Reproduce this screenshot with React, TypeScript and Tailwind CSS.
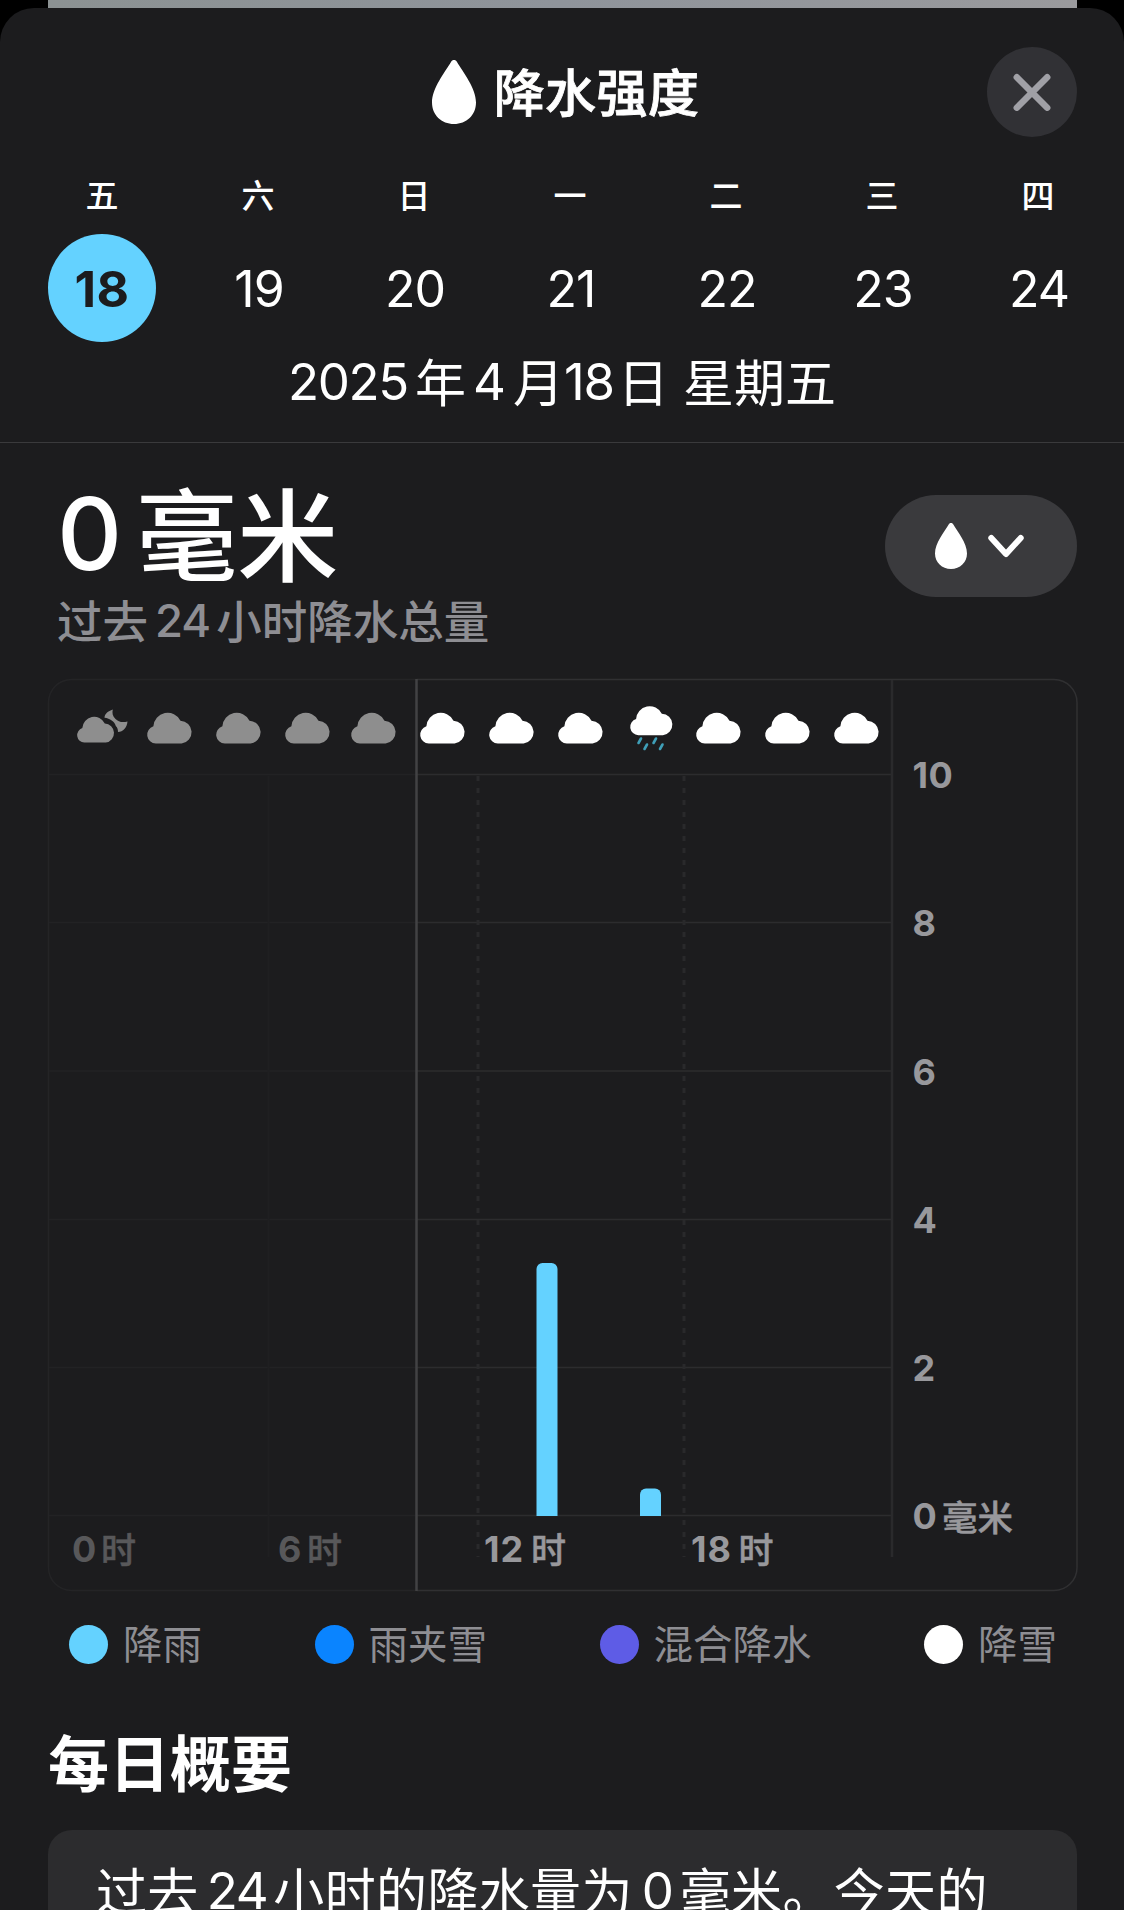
import React from "react";

const FONT = "font-['Inter','Noto_Sans_CJK_SC',sans-serif]";

const DAYS = [
  { label: "五", day: "18" },
  { label: "六", day: "19" },
  { label: "日", day: "20" },
  { label: "一", day: "21" },
  { label: "二", day: "22" },
  { label: "三", day: "23" },
  { label: "四", day: "24" },
];

const LEGEND = [
  { label: "降雨", dot: "bg-[#64d2ff]" },
  { label: "雨夹雪", dot: "bg-[#0a84ff]" },
  { label: "混合降水", dot: "bg-[#5e5ce6]" },
  { label: "降雪", dot: "bg-white" },
];

function Drop({ className }: { className: string }) {
  return (
    <svg viewBox="0 0 44 64" className={className} fill="currentColor" preserveAspectRatio="none">
      <path d="M22 0c-1.300 0-2.200.6-3 1.900C13 12 0 28 0 42.500C0 55 9.500 64 22 64s22-9 22-21.500C44 28 31 12 25 1.900C24.200.6 23.300 0 22 0z" />
    </svg>
  );
}

/* Cloud silhouette drawn in a 46 x 31 box. */
const CLOUD =
  "M8.800 31A8.800 8.800 0 0 1 6.400 13.800A14.300 14.300 0 0 1 33.500 8.200A11.450 11.450 0 0 1 34.600 31z";

const CLOUDS = [
  { x: 147, past: true },
  { x: 216, past: true },
  { x: 285, past: true },
  { x: 351, past: true },
  { x: 420, past: false },
  { x: 489, past: false },
  { x: 558, past: false },
  { x: 696, past: false },
  { x: 765, past: false },
  { x: 834, past: false },
];

const GRID = [
  { y: 774.5, label: "10" },
  { y: 922.5, label: "8" },
  { y: 1071, label: "6" },
  { y: 1219.5, label: "4" },
  { y: 1367.5, label: "2" },
  { y: 1515.5, label: "0" },
];

const HOURS = [
  { x: 72, hx: 101, label: "0", past: true },
  { x: 278, hx: 307, label: "6", past: true },
  { x: 484, hx: 531, label: "12", past: false },
  { x: 691, hx: 738.5, label: "18", past: false },
];

function Chart() {
  return (
    <svg
      viewBox="47 678 1032 914"
      className={`-ml-px -mt-px block h-[914px] w-[1032px] shrink-0 ${FONT}`}
      fill="none"
    >
      {/* frame: the elapsed part is dimmer */}
      <path d="M416.500 679.500H71.500a23 23 0 0 0-23 23V1567.500a23 23 0 0 0 23 23H416.500" stroke="#242426" strokeWidth="1.500" />
      <path d="M416.500 679.500H1054a23 23 0 0 1 23 23V1567.500a23 23 0 0 1-23 23H416.500" stroke="#303032" strokeWidth="1.500" />

      {GRID.map((g) => (
        <g key={g.y}>
          <path d={`M49 ${g.y}H416`} stroke="#222224" strokeWidth="1.500" />
          <path d={`M417 ${g.y}H891`} stroke="#2c2c2e" strokeWidth="1.500" />
          <text x="912.500" y={g.y + 13.500} fontSize="36" fontWeight="650" letterSpacing="0.600" fill="#98989c">
            {g.label}
          </text>
        </g>
      ))}
      <text x="942" y="1530.500" fontSize="35.500" fontWeight="500" fill="#98989c" stroke="#98989c" strokeWidth="0.500">
        毫米
      </text>

      <path d="M268.500 776V1557" stroke="#1f1f21" strokeWidth="2" />
      <path d="M478 776V1557M684 776V1557" stroke="#29292b" strokeWidth="3" strokeDasharray="5 7" />
      <path d="M892 680V1557" stroke="#2a2a2c" strokeWidth="2.500" />
      <path d="M416.500 679V1591" stroke="#424244" strokeWidth="2.500" />

      {HOURS.map((h) => (
        <g key={h.label} fill={h.past ? "#58585a" : "#98989c"} stroke={h.past ? "#58585a" : "#98989c"} strokeWidth="0">
          <text x={h.x} y="1562" fontSize="36" fontWeight="650" letterSpacing="1">
            {h.label}
          </text>
          <text x={h.hx} y="1563" fontSize="35" fontWeight="500" strokeWidth="0.500">
            时
          </text>
        </g>
      ))}

      <path d="M536.500 1516V1269a6 6 0 0 1 6-6h9a6 6 0 0 1 6 6V1516z" fill="#64d2ff" />
      <path d="M640 1516V1494.500a6 6 0 0 1 6-6h9a6 6 0 0 1 6 6V1516z" fill="#64d2ff" />

      {/* night cloud with moon */}
      <g fill="#8e8e8e">
        <path transform="translate(77 716.500) scale(.83 .84)" d={CLOUD} />
        <path d="M112.800 709.500C108 711 104.500 714 104.500 717.800C110 718.500 114.500 721.500 115.800 726C117.500 727.500 118 729.500 118 732C123 732 127 727.500 127.500 721.500C122.500 722.800 118.500 722 115.500 719C112.500 716 112 713 112.800 709.500z" />
      </g>
      {CLOUDS.map((c) => (
        <path key={c.x} transform={`translate(${c.x} 712.500)`} d={CLOUD} fill={c.past ? "#8e8e8e" : "#ffffff"} />
      ))}
      <path transform="translate(630 706) scale(.95 .94)" d={CLOUD} fill="#ffffff" />
      <path
        d="M641 738.500l-2.500 4.500M656 738.500l-2.500 4.500M647 744.500l-2.500 4.500M662.500 744.500l-2.500 4.500"
        stroke="#3f9fb8"
        strokeWidth="2.600"
        strokeLinecap="round"
      />
    </svg>
  );
}

/* Chinese run, set slightly below the baseline of the digits. */
function Han({ children }: { children: string }) {
  return <span className="align-[-0.035em] leading-none">{children}</span>;
}

export default function App() {
  return (
    <div className={`h-[1910px] w-[1124px] overflow-hidden bg-black text-white ${FONT}`}>
      <div className="mx-12 h-2 w-[1029px] bg-linear-to-r from-[#8c9293] via-[#8f949b] to-[#9a9a9d]" />
      <div className="flex h-[1902px] flex-col overflow-hidden rounded-t-[34px] bg-[#1c1c1e]">
        <header className="mt-[39px] ml-12 grid h-[90px] w-[1029px] shrink-0 grid-cols-[90px_1fr_90px] items-center">
          <span />
          <h1 className="flex items-center justify-center gap-[18px] pl-[6px]">
            <Drop className="h-16 w-11" />
            <span className="pt-1 text-[51px] leading-[60px] font-medium tracking-[0.4px] [-webkit-text-stroke:0.8px_white]">降水强度</span>
          </h1>
          <button className="flex size-[90px] items-center justify-center rounded-full bg-[#313135]" aria-label="关闭">
            <svg viewBox="0 0 38 38" className="size-[38px]" fill="none" stroke="#a0a0a6" strokeWidth="6.500" strokeLinecap="round">
              <path d="M3.800 4.300l30.400 30.400M34.200 4.300l-30.400 30.400" />
            </svg>
          </button>
        </header>

        <div className="mt-[39px] ml-6 grid w-[1092px] shrink-0 grid-cols-7">
          {DAYS.map((d, i) => (
            <div key={d.day} className="flex flex-col items-center gap-[18px]">
              <span className="text-[33px] leading-10 font-medium">{d.label}</span>
              <span
                className={
                  i === 0
                    ? "flex size-[108px] items-center justify-center rounded-full bg-[#64d2ff] pt-0.5 text-[50px] font-bold tracking-[0.5px] text-[#1c1c1e]"
                    : "flex size-[108px] items-center justify-center pt-0.5 pl-0.5 text-[50px] tracking-[-1px]"
                }
              >
                {d.day}
              </span>
            </div>
          ))}
        </div>

        <p className="mt-[10px] h-[60px] shrink-0 text-center text-[51px] leading-[60px] whitespace-nowrap">
          <span className="mr-[7px] tracking-[-1.3px]">2025</span>
          <Han>年</Han>
          <span className="mx-[7px]">4</span>
          <Han>月</Han>
          <span className="mr-1 tracking-[-1.3px]">18</span>
          <Han>日 星期五</Han>
        </p>
        <div className="mt-[30px] h-px shrink-0 bg-[#3a3a3c]" />

        <div className="mt-10 ml-12 flex w-[1029px] shrink-0 items-start justify-between">
          <div className="pl-[9px]">
            <div className="h-[100px] text-[101px] leading-[100px] font-medium">
              <span className="mr-[14px]">0</span>
              <Han>毫米</Han>
            </div>
            <div className="mt-[13px] h-[50px] text-[45.500px] leading-[50px] font-medium text-[#8e8e93]">
              <Han>过去</Han>
              <span className="mr-[6px] ml-[7px] tracking-[-1px]">24</span>
              <Han>小时降水总量</Han>
            </div>
          </div>
          <button className="mt-3 flex h-[102px] w-[192px] items-center gap-[21px] rounded-full bg-[#3a3a3d] pl-[50px]" aria-label="降水强度">
            <Drop className="h-[46px] w-8" />
            <svg viewBox="0 0 36 24" className="h-6 w-9" fill="none" stroke="currentColor" strokeWidth="6" strokeLinecap="round" strokeLinejoin="round">
              <path d="M3.300 4l14.700 16 14.700-16" />
            </svg>
          </button>
        </div>

        <div className="mt-[33px] ml-12 h-[912px] w-[1029px] shrink-0">
          <Chart />
        </div>

        <div className="mt-[34px] ml-[69px] flex h-[39px] w-[988px] shrink-0 items-center justify-between">
          {LEGEND.map((l) => (
            <div key={l.label} className="flex items-center gap-[15px]">
              <span className={`size-[39px] rounded-full ${l.dot}`} />
              <span className="pt-0.5 text-[39.500px] leading-[39px] text-[#8e8e93]">{l.label}</span>
            </div>
          ))}
        </div>

        <h2 className="mt-[71px] ml-12 h-[60px] shrink-0 text-[61px] leading-[60px] font-bold">每日概要</h2>

        <div className="mt-[35px] ml-12 h-[200px] w-[1029px] shrink-0 rounded-[24px] bg-[#2c2c2e] pt-[29px] pl-[48px]">
          <p className="text-[51px] leading-[64px] tracking-[0.35px] whitespace-nowrap">
            <Han>过去</Han>
            <span className="mr-[6px] ml-2 tracking-[-1.3px]">24</span>
            <Han>小时的降水量为</Han>
            <span className="mr-[7px] ml-[9px] tracking-[-1.3px]">0</span>
            <Han>毫米。今天的</Han>
          </p>
        </div>
      </div>
    </div>
  );
}
